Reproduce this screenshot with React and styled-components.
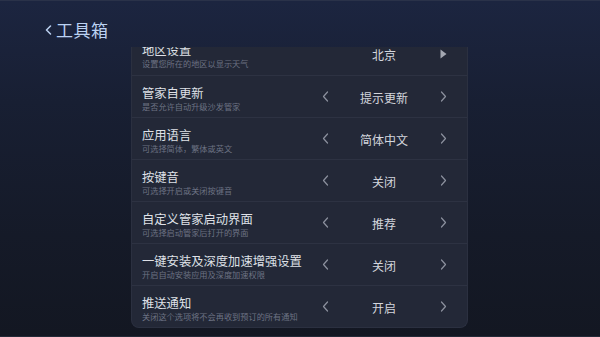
import React from "react";
import styled, { createGlobalStyle } from "styled-components";

const Global = createGlobalStyle`
  html, body { margin: 0; padding: 0; }
  body {
    width: 600px; height: 337px; overflow: hidden;
    font-family: "Noto Sans CJK SC", "Noto Sans", sans-serif;
  }
`;

const Screen = styled.div`
  width: 600px;
  height: 337px;
  box-sizing: border-box;
  border-top: 1px solid #2a3249;
  border-bottom: 1px solid #232a38;
  background: linear-gradient(180deg, #1c2540 0%, #181f33 30%, #151a28 70%, #131722 100%);
  display: flex;
  flex-direction: column;
  overflow: hidden;
`;

const Header = styled.div`
  height: 46px;
  flex: none;
  display: flex;
  align-items: center;
  padding: 12px 0 0 45px;
  box-sizing: border-box;
  gap: 4px;
  color: #bcd2f2;
  font-size: 17px;
  line-height: 22px;
  letter-spacing: 0.5px;
`;

const Viewport = styled.div`
  width: 337px;
  margin-left: 131px;
  height: 281px;
  flex: none;
  overflow: hidden;
`;

const Panel = styled.div`
  margin-top: -14px;
  background: #232837;
  border: 1px solid #2b3040;
  border-top: none;
  border-radius: 0 0 8px 8px;
  box-sizing: border-box;
`;

const Row = styled.div`
  height: 42px;
  box-sizing: border-box;
  display: grid;
  grid-template-columns: 1fr 20px 98px 20px;
  align-items: center;
  padding: 0 14px 0 10px;
  border-top: ${(p) => (p.$first ? "none" : "1px solid #2d3242")};
`;

const Texts = styled.div`
  display: flex;
  flex-direction: column;
  min-width: 0;
  padding-top: 2px;
`;

const Title = styled.div`
  color: #dfe1e7;
  font-size: 12.3px;
  line-height: 16px;
  white-space: nowrap;
`;

const Sub = styled.div`
  color: #6c7283;
  font-size: 8.2px;
  line-height: 10px;
  white-space: nowrap;
`;

const Value = styled.div`
  text-align: center;
  color: #d3d6dd;
  font-size: 12px;
  padding-top: 1px;
`;

const Arrow = styled.div`
  display: flex;
  justify-content: center;
  align-items: center;
`;

const Chevron = ({ dir }) => (
  <svg width="7" height="11" viewBox="0 0 7 11">
    <path
      d={dir === "left" ? "M5.5 1 L1.5 5.5 L5.5 10" : "M1.5 1 L5.5 5.5 L1.5 10"}
      fill="none"
      stroke="#8c919e"
      strokeWidth="1.2"
      strokeLinecap="round"
      strokeLinejoin="round"
    />
  </svg>
);

const Triangle = () => (
  <svg width="7" height="10" viewBox="0 0 7 10">
    <path d="M0.5 0.5 L6.5 5 L0.5 9.5 Z" fill="#a3a7b1" />
  </svg>
);

const BackIcon = () => (
  <svg width="7" height="10" viewBox="0 0 7 10">
    <path d="M5.5 1 L1.5 5 L5.5 9" fill="none" stroke="#bcd2f2" strokeWidth="1.5" strokeLinecap="round" strokeLinejoin="round" />
  </svg>
);

const rows = [
  { t: "地区设置", s: "设置您所在的地区以显示天气", v: "北京", tri: true },
  { t: "管家自更新", s: "是否允许自动升级沙发管家", v: "提示更新" },
  { t: "应用语言", s: "可选择简体，繁体或英文", v: "简体中文" },
  { t: "按键音", s: "可选择开启或关闭按键音", v: "关闭" },
  { t: "自定义管家启动界面", s: "可选择启动管家后打开的界面", v: "推荐" },
  { t: "一键安装及深度加速增强设置", s: "开启自动安装应用及深度加速权限", v: "关闭" },
  { t: "推送通知", s: "关闭这个选项将不会再收到预订的所有通知", v: "开启" },
];

export default function App() {
  return (
    <>
      <Global />
      <Screen>
        <Header>
          <BackIcon />
          <span>工具箱</span>
        </Header>
        <Viewport>
          <Panel>
            {rows.map((r, i) => (
              <Row key={i} $first={i === 0}>
                <Texts>
                  <Title>{r.t}</Title>
                  <Sub>{r.s}</Sub>
                </Texts>
                <Arrow>{r.tri ? null : <Chevron dir="left" />}</Arrow>
                <Value>{r.v}</Value>
                <Arrow>{r.tri ? <Triangle /> : <Chevron dir="right" />}</Arrow>
              </Row>
            ))}
          </Panel>
        </Viewport>
      </Screen>
    </>
  );
}
